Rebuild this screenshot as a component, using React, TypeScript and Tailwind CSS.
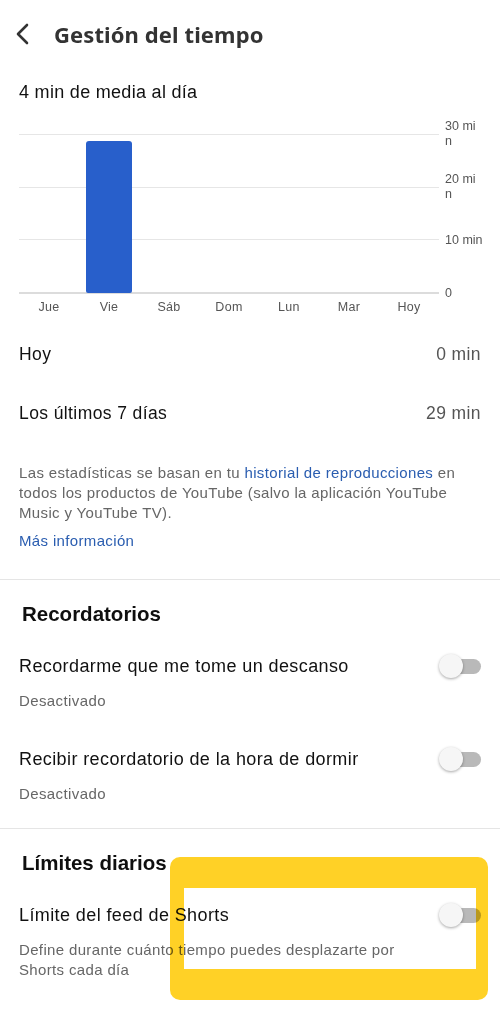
import React from "react";

const days = ["Jue", "Vie", "Sáb", "Dom", "Lun", "Mar", "Hoy"];
const values = [0, 28.7, 0, 0, 0, 0, 0];
const PLOT_H = 159;

function Toggle() {
  return (
    <div className="relative w-[42px] h-[26px] flex items-center shrink-0">
      <div className="ml-[6px] w-[36px] h-[15px] rounded-full bg-[#b9b9b9]" />
      <div className="absolute left-0 top-[1px] w-[24px] h-[24px] rounded-full bg-[#f6f6f6] shadow-[0_1px_3px_rgba(0,0,0,0.35)]" />
    </div>
  );
}

export default function App() {
  const ticks = [
    { y: 0, label: ["30 mi", "n"] },
    { y: 53, label: ["20 mi", "n"] },
    { y: 106, label: ["10 min"] },
    { y: 159, label: ["0"] },
  ];
  return (
    <div
      className="relative w-[500px] h-[1033px] bg-white overflow-hidden text-[#0f0f0f]"
      style={{ fontFamily: "'Liberation Sans', Arial, sans-serif" }}
    >
      {/* Header */}
      <div className="flex items-center h-[68px] pl-[14px]">
        <svg width="18" height="24" viewBox="0 0 18 24" className="shrink-0">
          <path d="M13 3 L4 12 L13 21" fill="none" stroke="#333" strokeWidth="2.6" strokeLinecap="round" strokeLinejoin="round" />
        </svg>
        <div
          className="ml-[22px] text-[22px] font-bold text-[#333] tracking-[0.1px]"
          style={{ fontFamily: "'Noto Sans', sans-serif" }}
        >
          Gestión del tiempo
        </div>
      </div>

      <div className="px-[19px]">
        <div className="text-[18px] leading-[24px] mt-[12px] text-[#111] tracking-[0.3px]">4 min de media al día</div>

        {/* Chart */}
        <div className="mt-[30px] flex">
          <div className="w-[420px] shrink-0">
            <div className="relative" style={{ height: PLOT_H + 1 }}>
              <div className="flex flex-col justify-between h-full">
                <div className="h-px bg-[#e6e6e6]" />
                <div className="h-px bg-[#e6e6e6]" />
                <div className="h-px bg-[#e6e6e6]" />
                <div className="h-[2px] bg-[#dcdcdc]" />
              </div>
              <div className="absolute inset-x-0 top-0 bottom-[1px] grid grid-cols-7 items-end">
                {values.map((v, i) => (
                  <div key={i} className="flex justify-center items-end h-full">
                    {v > 0 && (
                      <div
                        className="w-[46px] bg-[#285fcb] rounded-t-[3px] rounded-b-[2px]"
                        style={{ height: (v / 30) * PLOT_H }}
                      />
                    )}
                  </div>
                ))}
              </div>
            </div>
            <div className="grid grid-cols-7 mt-[5px]">
              {days.map((d) => (
                <div key={d} className="text-center text-[12.5px] leading-[16px] text-[#555] tracking-[0.3px]">
                  {d}
                </div>
              ))}
            </div>
          </div>
          <div className="relative ml-[6px] w-[36px] shrink-0" style={{ height: PLOT_H }}>
            {ticks.map((t) => (
              <div
                key={t.y}
                className="absolute left-0 -translate-y-1/2 text-[12.5px] leading-[15px] text-[#555] whitespace-nowrap"
                style={{ top: t.y }}
              >
                {t.label.map((l) => (
                  <div key={l}>{l}</div>
                ))}
              </div>
            ))}
          </div>
        </div>

        {/* Stats */}
        <div className="flex justify-between items-center mt-[27px] text-[17.5px] leading-[24px] tracking-[0.4px]">
          <span className="text-[#111]">Hoy</span>
          <span className="text-[#555]">0 min</span>
        </div>
        <div className="flex justify-between items-center mt-[35px] text-[17.5px] leading-[24px] tracking-[0.4px]">
          <span className="text-[#111]">Los últimos 7 días</span>
          <span className="text-[#555]">29 min</span>
        </div>

        <p className="mt-[38px] text-[15px] leading-[20px] text-[#666] tracking-[0.35px] pr-[8px]">
          Las estadísticas se basan en tu <span className="text-[#2a5db0]">historial de reproducciones</span> en
          todos los productos de YouTube (salvo la aplicación YouTube Music y YouTube TV).
        </p>
        <div className="mt-[8px] text-[15px] leading-[20px] text-[#2a5db0] tracking-[0.35px]">Más información</div>
      </div>

      <div className="mt-[28px] h-px bg-[#e5e5e5]" />

      {/* Recordatorios */}
      <div className="px-[19px]">
        <div className="mt-[21px] pl-[3px] text-[20.5px] leading-[26px] font-bold text-[#0f0f0f]">Recordatorios</div>

        <div className="mt-[26px] flex items-center justify-between">
          <span className="text-[18px] leading-[24px] text-[#111] tracking-[0.4px]">Recordarme que me tome un descanso</span>
          <Toggle />
        </div>
        <div className="mt-[12px] text-[15px] leading-[20px] text-[#666] tracking-[0.4px]">Desactivado</div>

        <div className="mt-[35px] flex items-center justify-between">
          <span className="text-[18px] leading-[24px] text-[#111] tracking-[0.4px]">Recibir recordatorio de la hora de dormir</span>
          <Toggle />
        </div>
        <div className="mt-[12px] text-[15px] leading-[20px] text-[#666] tracking-[0.4px]">Desactivado</div>
      </div>

      <div className="mt-[24px] h-px bg-[#e5e5e5]" />

      {/* Límites diarios */}
      <div className="px-[19px]">
        <div className="mt-[21px] pl-[3px] text-[20.5px] leading-[26px] font-bold text-[#0f0f0f]">Límites diarios</div>
        <div className="mt-[26px] flex items-center justify-between">
          <span className="text-[18px] leading-[24px] text-[#111] tracking-[0.4px]">Límite del feed de Shorts</span>
          <Toggle />
        </div>
        <p className="mt-[12px] text-[15px] leading-[20px] text-[#666] pr-[50px] tracking-[0.35px]">
          Define durante cuánto tiempo puedes desplazarte por Shorts cada día
        </p>
      </div>

      {/* Yellow highlight annotation */}
      <div className="absolute left-[170px] top-[857px] w-[318px] h-[143px] rounded-[10px] border-[#ffcf1a] border-l-[14px] border-r-[12px] border-t-[31px] border-b-[31px] mix-blend-multiply opacity-95" />
    </div>
  );
}
